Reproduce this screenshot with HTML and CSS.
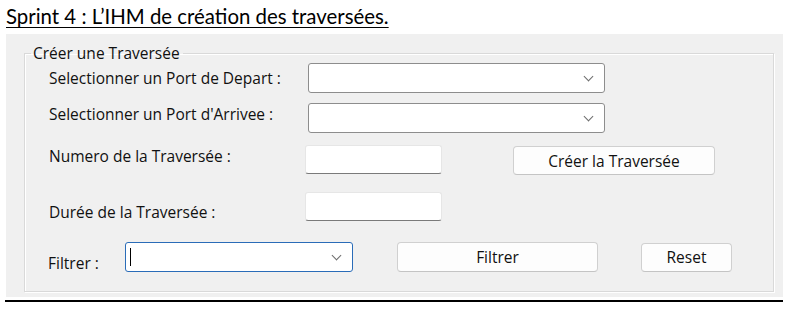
FILE: index.html
```html
<!DOCTYPE html>
<html lang="fr">
<head>
    <meta charset="UTF-8">
    <title>Sprint 4 - Traversées</title>
    <link rel="stylesheet" href="styles.css">
</head>
<body>
    <h1 class="title">Sprint 4 : L’IHM de création des traversées.</h1>

    <div class="window">
        <fieldset class="group">
            <legend>Créer une Traversée</legend>

            <!-- Ports -->
            <div class="row row-port">
                <span class="label">Selectionner un Port de Depart :</span>
                <div class="combo combo-port"><span class="chevron"></span></div>
            </div>
            <div class="row row-port row-arrivee">
                <span class="label label-up">Selectionner un Port d'Arrivee :</span>
                <div class="combo combo-port"><span class="chevron"></span></div>
            </div>

            <!-- Numero / Durée -->
            <div class="row row-numero">
                <span class="label label-up">Numero de la Traversée :</span>
                <div class="textbox"></div>
                <button class="btn btn-creer">Créer la Traversée</button>
            </div>
            <div class="row row-duree">
                <span class="label label-down">Durée de la Traversée :</span>
                <div class="textbox"></div>
            </div>

            <!-- Filtre -->
            <div class="row row-filtre">
                <span class="label label-filtre">Filtrer :</span>
                <div class="combo combo-filtre"><span class="caret"></span><span class="chevron"></span></div>
                <button class="btn btn-filtrer">Filtrer</button>
                <button class="btn btn-reset">Reset</button>
            </div>
        </fieldset>
    </div>

    <div class="rule"></div>
</body>
</html>
```

FILE: styles.css
```css
body {
    margin: 0;
    background-color: #fff;
    font-family: "Open Sans", "Noto Sans", sans-serif;
    color: #111;
}

.title {
    margin: 0;
    padding: 5px 0 0 6px;
    height: 30px;
    box-sizing: border-box;
    font-family: Lato, "Liberation Sans", sans-serif;
    font-size: 20.4px;
    font-weight: normal;
    line-height: 22px;
    color: #000;
    text-decoration: underline;
    text-decoration-thickness: 1px;
    text-underline-offset: 3px;
}

.window {
    margin: 4px 9px 0 6px;
    padding: 10px 9px 6px 18px;
    background-color: #f0f0f0;
    height: 263px;
    box-sizing: border-box;
}

.rule {
    margin: 3px 9px 0 5px;
    height: 2px;
    background-color: #000;
}

.group {
    margin: 0;
    padding: 0;
    height: 248px;
    box-sizing: border-box;
    border: 1px solid #d9d9d9;
    box-shadow: inset 1px 1px 0 #fff, 1px 1px 0 #fff;
}

.group legend {
    margin-left: 6px;
    padding: 0 3px 0 2px;
    font-size: 15.5px;
    line-height: 18px;
    color: #111;
}

.row {
    display: flex;
    align-items: center;
    height: 30px;
}

.row-port {
    margin-top: 1px;
}

.row-arrivee {
    margin-top: 10px;
}

.row-numero {
    margin-top: 12px;
    height: 29px;
}

.row-duree {
    margin-top: 18px;
    height: 29px;
}

.row-filtre {
    margin-top: 21px;
}

.label {
    width: 259px;
    padding-left: 24px;
    font-size: 15.5px;
    white-space: nowrap;
}

.label-up {
    position: relative;
    top: -4px;
}

.label-down {
    position: relative;
    top: 5px;
}

.label-filtre {
    width: 77px;
    padding-left: 23px;
    position: relative;
    top: 6px;
}

.combo {
    position: relative;
    height: 30px;
    box-sizing: border-box;
    background-color: #fff;
    border: 1px solid #8d8d8d;
    border-radius: 3px;
}

.combo-port {
    width: 297px;
}

.combo-filtre {
    width: 228px;
    border-color: #2a6cb8;
}

.chevron {
    position: absolute;
    right: 12px;
    top: 9px;
    width: 6px;
    height: 6px;
    border-right: 1px solid #6d6d6d;
    border-bottom: 1px solid #6d6d6d;
    transform: rotate(45deg);
}

.caret {
    position: absolute;
    left: 4px;
    top: 5px;
    width: 1px;
    height: 18px;
    background-color: #000;
}

.textbox {
    width: 137px;
    height: 29px;
    margin-left: -3px;
    box-sizing: border-box;
    background-color: #fff;
    border: 1px solid #e6e6e6;
    border-bottom-color: #7a7a7a;
    border-radius: 3px;
}

.btn {
    height: 29px;
    box-sizing: border-box;
    background-color: #fdfdfd;
    border: 1px solid #d0d0d0;
    border-bottom-color: #c4c4c4;
    border-radius: 4px;
    font-family: "Open Sans", "Noto Sans", sans-serif;
    font-size: 15.5px;
    color: #111;
    padding: 0;
}

.btn-creer {
    width: 202px;
    margin-left: 71px;
    margin-top: 2px;
}

.btn-filtrer {
    width: 201px;
    margin-left: 44px;
    height: 30px;
}

.btn-reset {
    width: 91px;
    margin-left: 43px;
}
```
